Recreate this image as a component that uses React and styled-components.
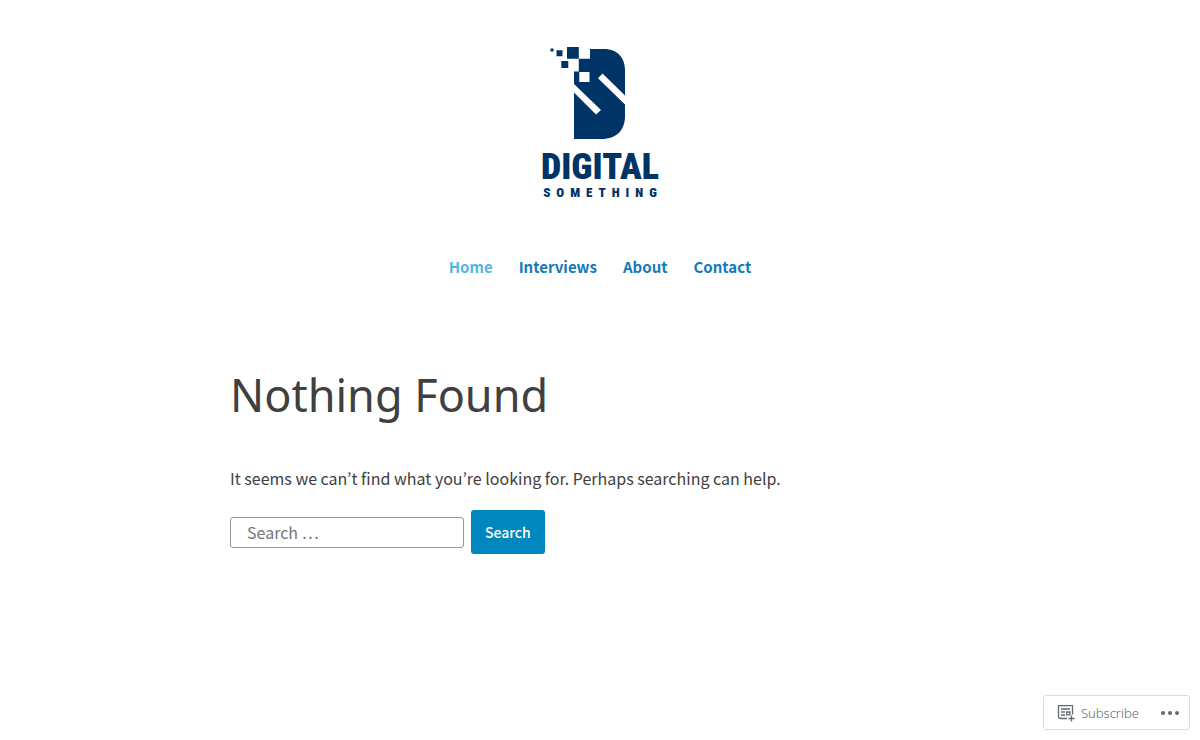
import React from "react";
import styled, { createGlobalStyle } from "styled-components";

const sans = `"Noto Sans CJK KR", "Noto Sans", sans-serif`;
const display = `"Noto Sans", "Open Sans", sans-serif`;
const heavy = `"Roboto Condensed", Roboto, sans-serif`;

const GlobalStyle = createGlobalStyle`
  *, *::before, *::after { box-sizing: border-box; }
  body {
    margin: 0;
    background: #fff;
    color: #404040;
    font-family: ${sans};
    font-size: 16px;
    line-height: 26px;
  }
`;

const Header = styled.header`
  display: flex;
  flex-direction: column;
  align-items: center;
  padding: 46px 24px 0;
`;

const LogoLink = styled.a`
  display: flex;
  flex-direction: column;
  align-items: center;
  color: #003366;
  text-decoration: none;
`;

const LogoMark = styled.svg`
  display: block;
  width: 116px;
  height: 94px;
  fill: currentColor;
`;

const LogoName = styled.span`
  margin-top: 9px;
  font-family: ${heavy};
  font-size: 36px;
  font-weight: 900;
  line-height: 36px;
`;

const LogoTagline = styled.span`
  margin-top: 1px;
  font-family: ${heavy};
  font-size: 13px;
  font-weight: 900;
  line-height: 14px;
  letter-spacing: 6px;
  margin-right: -6px;
`;

const Nav = styled.nav`
  margin-top: 53px;
`;

const NavList = styled.ul`
  display: flex;
  flex-wrap: wrap;
  justify-content: center;
  gap: 8px 26px;
  margin: 0;
  padding: 0;
  list-style: none;
`;

const NavLink = styled.a`
  color: ${({ $current }) => ($current ? "#52b6e0" : "#117bb8")};
  font-size: 15px;
  font-weight: 700;
  text-decoration: none;
`;

const Main = styled.main`
  max-width: 788px;
  margin: 0 auto;
  padding: 84px 24px 96px;
`;

const Title = styled.h1`
  margin: 0;
  font-family: ${display};
  font-size: 45px;
  font-weight: 400;
  line-height: 62px;
`;

const Message = styled.p`
  margin: 39px 0 19px;
`;

const SearchForm = styled.form`
  display: flex;
  align-items: center;
  gap: 7px;
`;

const SearchInput = styled.input`
  width: 234px;
  height: 31px;
  padding: 0 16px;
  border: 1px solid #949494;
  border-radius: 3px;
  background: #fff;
  color: #404040;
  font-family: ${sans};
  font-size: 16px;

  &::placeholder {
    color: #757575;
    opacity: 1;
  }
`;

const SearchButton = styled.button`
  height: 44px;
  padding: 0 14px;
  border: 0;
  border-radius: 3px;
  background: #0087be;
  color: #fff;
  font-family: ${sans};
  font-size: 14px;
  font-weight: 500;
`;

const ActionBar = styled.aside`
  position: fixed;
  right: 10px;
  bottom: 10px;
  display: flex;
  align-items: center;
  justify-content: space-between;
  gap: 21px;
  height: 35px;
  padding: 0 9px 0 13px;
  border: 1px solid #dcdcde;
  border-radius: 3px;
  background: #fff;
`;

const ActionButton = styled.button`
  display: flex;
  align-items: center;
  gap: 6px;
  padding: 0;
  border: 0;
  background: none;
  color: #646970;
  font-family: ${display};
  font-size: 13px;
  font-weight: 300;
  line-height: 20px;
`;

const links = ["Home", "Interviews", "About", "Contact"];

function Logo() {
  return (
    <LogoLink href="#" aria-label="Digital Something">
      <LogoMark viewBox="0 0 116 94" aria-hidden="true">
        <path d="M8.5 2.5h3v3h-3zM14.5 4.3h6v6h-6zM25 1h11.8v11.8H25zM19.3 15h7v7h-7z" />
        <path d="M48 3h14C75 3 83 11.500 83 24V49.500L60.500 27.500 56 32.200 83 58.500V70C83 84.500 74 93 60 93H32V46.500L54 68.500 59 64 32 38V25.500H36.800V12.800H48zM37.300 26V36H47.500V26z" fillRule="evenodd" />
      </LogoMark>
      <LogoName>DIGITAL</LogoName>
      <LogoTagline>SOMETHING</LogoTagline>
    </LogoLink>
  );
}

function SubscribeIcon() {
  return (
    <svg width="18" height="18" viewBox="0 0 18 18" fill="none" stroke="currentColor" strokeWidth="1.300" aria-hidden="true">
      <path d="M10 14.500H3.200A1.700 1.700 0 0 1 1.500 12.800V1.700H15.500V10.500" />
      <path d="M4 5h9M4 8h4M4 11h4M9.700 8h3.200v2.800H9.700zM14.500 11.500v6M11.500 14.500h6" />
    </svg>
  );
}

function DotsIcon() {
  return (
    <svg width="20" height="6" viewBox="0 0 20 6" fill="currentColor" aria-hidden="true">
      <circle cx="3" cy="3" r="2" />
      <circle cx="10" cy="3" r="2" />
      <circle cx="17" cy="3" r="2" />
    </svg>
  );
}

export default function App() {
  return (
    <>
      <GlobalStyle />
      <Header>
        <Logo />
        <Nav aria-label="Primary">
          <NavList>
            {links.map((label, i) => (
              <li key={label}>
                <NavLink href="#" $current={i === 0} aria-current={i === 0 ? "page" : undefined}>
                  {label}
                </NavLink>
              </li>
            ))}
          </NavList>
        </Nav>
      </Header>
      <Main>
        <Title>Nothing Found</Title>
        <Message>It seems we can’t find what you’re looking for. Perhaps searching can help.</Message>
        <SearchForm role="search" onSubmit={(e) => e.preventDefault()}>
          <SearchInput type="search" placeholder="Search …" aria-label="Search for:" />
          <SearchButton type="submit">Search</SearchButton>
        </SearchForm>
      </Main>
      <ActionBar>
        <ActionButton type="button">
          <SubscribeIcon />
          Subscribe
        </ActionButton>
        <ActionButton type="button" aria-label="More options">
          <DotsIcon />
        </ActionButton>
      </ActionBar>
    </>
  );
}
